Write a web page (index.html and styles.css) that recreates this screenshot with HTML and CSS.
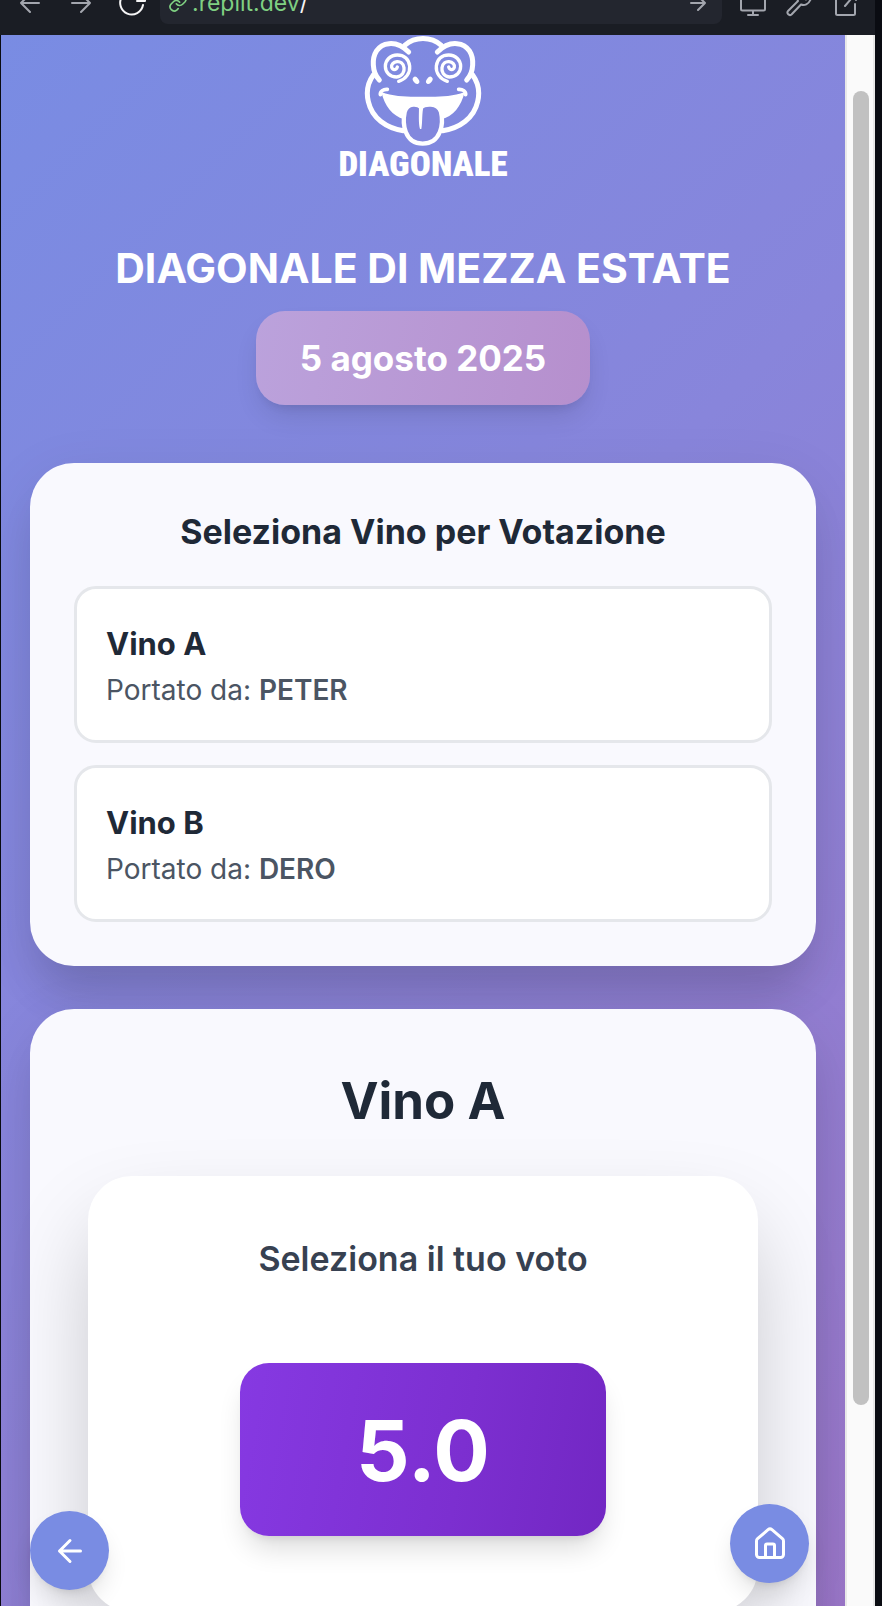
FILE: index.html
```html
<!DOCTYPE html>
<html lang="it">
<head>
<meta charset="utf-8">
<meta name="viewport" content="width=device-width, initial-scale=1">
<title>Diagonale di Mezza Estate</title>
<link rel="stylesheet" href="styles.css">
</head>
<body>
<div class="shell">
  <header class="toolbar">
    <button class="tool" aria-label="Indietro"><svg viewBox="0 0 24 24"><path d="M21 12H3M12 3l-9 9 9 9"/></svg></button>
    <button class="tool" aria-label="Avanti"><svg viewBox="0 0 24 24"><path d="M3 12h18M12 3l9 9-9 9"/></svg></button>
    <button class="tool tool-bright" aria-label="Ricarica"><svg viewBox="0 0 28 28"><path d="M25 16A11.500 11.500 0 1 1 22 6M27 3v9h-8"/></svg></button>
    <div class="address">
      <svg class="link-icon" viewBox="0 0 24 24"><path d="M10 13a5 5 0 0 0 7.500.500l3-3a5 5 0 0 0-7-7l-1.700 1.700M14 11a5 5 0 0 0-7.500-.500l-3 3a5 5 0 0 0 7 7l1.700-1.700"/></svg>
      <label class="host" for="path">.replit.dev</label>
      <input class="path" id="path" type="text" value="/">
      <button class="go" aria-label="Vai"><svg viewBox="0 0 16 16"><path d="M1 8h14M8 1l7 7-7 7"/></svg></button>
    </div>
    <button class="tool tool-end" aria-label="Dispositivi"><svg viewBox="0 0 28 28"><path d="M2 3h24v17a1.500 1.500 0 0 1-1.500 1.500h-21A1.500 1.500 0 0 1 2 20zM14 21.500V26M9 26h10"/></svg></button>
    <button class="tool tool-end" aria-label="Strumenti"><svg viewBox="0 0 28 28"><path d="M17 3a7 7 0 0 0-4 9L3 22a2.500 2.500 0 0 0 3.500 3.500L16 15.500a7 7 0 0 0 9-4 7 7 0 0 0 1-5l-5 4-4-4z"/></svg></button>
    <button class="tool tool-end" aria-label="Apri in una nuova scheda"><svg viewBox="0 0 28 28"><path d="M12 5H5v19.500a1.500 1.500 0 0 0 1.500 1.500h16a1.500 1.500 0 0 0 1.500-1.500V15M14 17L25 4M17 3h8v8"/></svg></button>
  </header>

  <div class="viewport">
    <main class="page">
      <div class="logo">
        <svg class="logo-face" viewBox="129 15 360 335" aria-hidden="true">
          <g class="ink">
            <path d="M254 46C285 19 333 19 364 46"/>
            <path d="M266 66C246 46 226 39 207 41C172 44 158 75 160 105C161 125 168 140 178 150"/>
            <path d="M352 66C372 46 392 39 411 41C446 44 460 75 458 105C457 125 450 140 440 150"/>
            <path d="M160 135C142 160 139 190 145 215C156 265 200 295 250 302"/>
            <path d="M458 135C476 160 479 190 473 215C462 265 418 295 368 302"/>
          </g>
          <path class="tick" d="M181 194C180 184 190 177 202 178M437 194C438 184 428 177 416 178"/>
          <path class="spiral" d="M236 154C258 148 271 128 269 108C266 85 250 75 232 75C210 75 196 92 196 109C196 128 210 141 230 141C247 139 254 125 252 113C250 100 240 94 231 95C220 96 213 104 215 112C218 121 228 122 232 111"/>
          <path class="spiral" d="M382 154C360 148 347 128 349 108C352 85 368 75 386 75C408 75 422 92 422 109C422 128 408 141 388 141C371 139 364 125 366 113C368 100 378 94 387 95C398 96 405 104 403 112C400 121 390 122 386 111"/>
          <ellipse class="solid" cx="288" cy="151" rx="8" ry="12" transform="rotate(-38 288 151)"/>
          <ellipse class="solid" cx="328" cy="151" rx="8" ry="12" transform="rotate(38 328 151)"/>
          <path class="solid" d="M184 186C225 202 270 200 309 200C350 200 393 202 434 186C424 228 400 260 362 268H252C218 258 194 228 184 186Z"/>
          <path class="tongue" d="M303 232C296 222 262 215 254 246C247 280 252 340 308 341C364 340 371 280 363 246C354 215 312 222 303 232Z"/>
          <path class="solid" d="M297 228C297 250 295 280 300 297H304C308 276 305 250 311 228Z"/>
        </svg>
        <span class="logo-name">DIAGONALE</span>
      </div>

      <h1 class="title">DIAGONALE DI MEZZA ESTATE</h1>
      <p class="date">5 agosto 2025</p>

      <section class="card">
        <h2 class="card-title">Seleziona Vino per Votazione</h2>
        <button class="wine">
          <span class="wine-name">Vino A</span>
          <span class="wine-by">Portato da: <b>PETER</b></span>
        </button>
        <button class="wine">
          <span class="wine-name">Vino B</span>
          <span class="wine-by">Portato da: <b>DERO</b></span>
        </button>
      </section>

      <section class="card card-vote">
        <h2 class="vote-wine">Vino A</h2>
        <div class="vote">
          <h3 class="vote-title">Seleziona il tuo voto</h3>
          <button class="score">5.0</button>
        </div>
      </section>
    </main>
    <div class="scrollbar" aria-hidden="true"><div class="thumb"></div></div>
    <button class="round round-back" aria-label="Indietro"><svg viewBox="0 0 24 24"><path d="m12 19-7-7 7-7M19 12H5"/></svg></button>
    <button class="round round-home" aria-label="Home"><svg viewBox="0 0 24 24"><path d="M15 21v-8a1 1 0 0 0-1-1h-4a1 1 0 0 0-1 1v8"/><path d="M3 10a2 2 0 0 1 .709-1.528l7-5.999a2 2 0 0 1 2.582 0l7 5.999A2 2 0 0 1 21 10v9a2 2 0 0 1-2 2H5a2 2 0 0 1-2-2z"/></svg></button>
  </div>
</div>
</body>
</html>
```
FILE: styles.css
```css
* {
  box-sizing: border-box;
}

body {
  margin: 0;
  background: #0a0c12;
  color: #1f2937;
  font-family: Inter, "Liberation Sans", sans-serif;
}

h1,
h2,
h3,
p {
  margin: 0;
}

button,
input {
  margin: 0;
  padding: 0;
  border: 0;
  background: none;
  color: inherit;
  font: inherit;
}

svg {
  display: block;
  fill: none;
  stroke: currentColor;
  stroke-linecap: round;
  stroke-linejoin: round;
}

.shell {
  display: flex;
  flex-direction: column;
  height: 100vh;
  overflow: hidden;
  padding: 0 7px 0 1px;
}

/* Browser bar */
.toolbar {
  display: flex;
  flex: none;
  align-items: flex-end;
  height: 35px;
  margin-left: -1px;
  padding: 0 16px 11px 16px;
  overflow: hidden;
  background: #1a1d24;
  color: #a3a6ae;
}

.tool {
  display: grid;
  flex: none;
  place-items: center;
  width: 28px;
  height: 42px;
  margin-right: 23px;
}

.tool svg {
  width: 24px;
  stroke-width: 2;
}

.tool-bright {
  margin-right: 14px;
  color: #f5f5f6;
}

.tool-bright svg,
.tool-end svg {
  width: 28px;
}

.tool-end {
  margin: 0 0 0 17px;
}

.tool-end + .tool-end {
  margin-left: 18px;
}

.address {
  display: flex;
  flex: 1;
  align-items: center;
  height: 42px;
  min-width: 0;
  padding: 0 16px 0 8px;
  border-radius: 8px;
  background: #23262f;
}

.link-icon {
  width: 20px;
  margin-right: 4px;
  color: #7fd082;
  stroke-width: 2;
}

.host {
  color: #7fd082;
  font-size: 23px;
}

.path {
  flex: 1;
  min-width: 0;
  color: #f5f5f6;
  font-size: 23px;
}

.go svg {
  width: 16px;
  stroke-width: 2;
}

/* Page */
.viewport {
  position: relative;
  display: flex;
  flex: 1;
  min-height: 0;
}

.page {
  display: flex;
  flex: 1;
  flex-direction: column;
  align-items: center;
  min-width: 0;
  padding: 0 29px;
  overflow: hidden;
  background: linear-gradient(135deg, #798ce3 0%, #8885db 45%, #9a76c8 100%);
}

.scrollbar {
  flex: none;
  width: 30px;
  padding: 56px 4px 0 6px;
  border: solid #e8e8e8;
  border-width: 0 2px;
  background: #fafafa;
}

.thumb {
  width: 16px;
  height: 86.7%;
  border-radius: 8px;
  background: #c1c1c1;
}

.logo {
  display: flex;
  flex: none;
  flex-direction: column;
  align-items: center;
  color: #fff;
}

.logo-face {
  width: 120px;
}

.ink {
  stroke-width: 15;
}

.tick {
  stroke-width: 11;
}

.spiral {
  stroke-width: 10;
}

.solid {
  fill: currentColor;
  stroke: none;
}

.tongue {
  fill: #8287dd;
  stroke-width: 13;
}

.logo-name {
  font-family: "Liberation Sans Narrow", "Roboto Condensed", "Open Sans Condensed", Roboto, sans-serif;
  font-size: 35px;
  font-weight: 900;
  line-height: 36px;
}

.title {
  flex: none;
  margin-top: 59px;
  color: #fff;
  font-size: 41px;
  font-weight: 700;
  line-height: 52px;
  white-space: nowrap;
}

.date {
  flex: none;
  margin-top: 17px;
  padding: 22px 44px;
  border-radius: 29px;
  background: linear-gradient(100deg, #bba2dc, #b68fcd);
  box-shadow: 0 15px 28px -6px rgba(0, 0, 0, 0.12), 0 7px 11px -7px rgba(0, 0, 0, 0.12);
  color: #fff;
  font-size: 35px;
  font-weight: 700;
  line-height: 50px;
}

.card {
  display: flex;
  flex: none;
  flex-direction: column;
  gap: 22px;
  width: 100%;
  margin-top: 58px;
  padding: 44px;
  border-radius: 44px;
  background: #f9f9fe;
  box-shadow: 0 36px 44px -10px rgba(0, 0, 0, 0.13), 0 14px 60px rgba(0, 0, 0, 0.08);
}

.card-title {
  margin-bottom: 7px;
  font-size: 34px;
  font-weight: 700;
  line-height: 50px;
  text-align: center;
}

.wine {
  display: flex;
  flex-direction: column;
  padding: 29px;
  border: 3px solid #e5e7eb;
  border-radius: 22px;
  background: #fff;
  text-align: left;
}

.wine-name {
  font-size: 31px;
  font-weight: 700;
  line-height: 52px;
}

.wine-by {
  color: #4b5563;
  font-size: 28px;
  line-height: 41px;
}

.wine-by b {
  font-weight: 600;
}

.card-vote {
  gap: 41px;
  margin-top: 43px;
  padding: 58px;
}

.vote-wine {
  font-size: 51px;
  font-weight: 700;
  line-height: 68px;
  text-align: center;
}

.vote {
  display: flex;
  flex-direction: column;
  align-items: center;
  gap: 79px;
  padding: 58px 58px 76px;
  border-radius: 44px;
  background: #fff;
  box-shadow: 0 44px 90px -10px rgba(0, 0, 0, 0.23);
}

.vote-title {
  color: #374151;
  font-size: 34px;
  font-weight: 600;
  line-height: 50px;
}

.score {
  padding: 44px 116px 42px;
  border-radius: 29px;
  background: linear-gradient(100deg, #8639e2, #7c2fd0 60%, #7227c3);
  box-shadow: 0 18px 28px -6px rgba(0, 0, 0, 0.14), 0 7px 11px -7px rgba(0, 0, 0, 0.12);
  color: #fff;
  font-size: 84px;
  font-weight: 700;
  line-height: 87px;
}

.round {
  position: absolute;
  display: grid;
  place-items: center;
  width: 79px;
  height: 79px;
  border-radius: 50%;
  background: #798ce3;
  box-shadow: 0 14px 24px -4px rgba(0, 0, 0, 0.12), 0 6px 10px -6px rgba(0, 0, 0, 0.12);
  color: #fff;
}

.round svg {
  width: 36px;
  stroke-width: 2;
}

.round-back {
  bottom: 16px;
  left: 29px;
}

.round-home {
  right: 66px;
  bottom: 23px;
}
```
